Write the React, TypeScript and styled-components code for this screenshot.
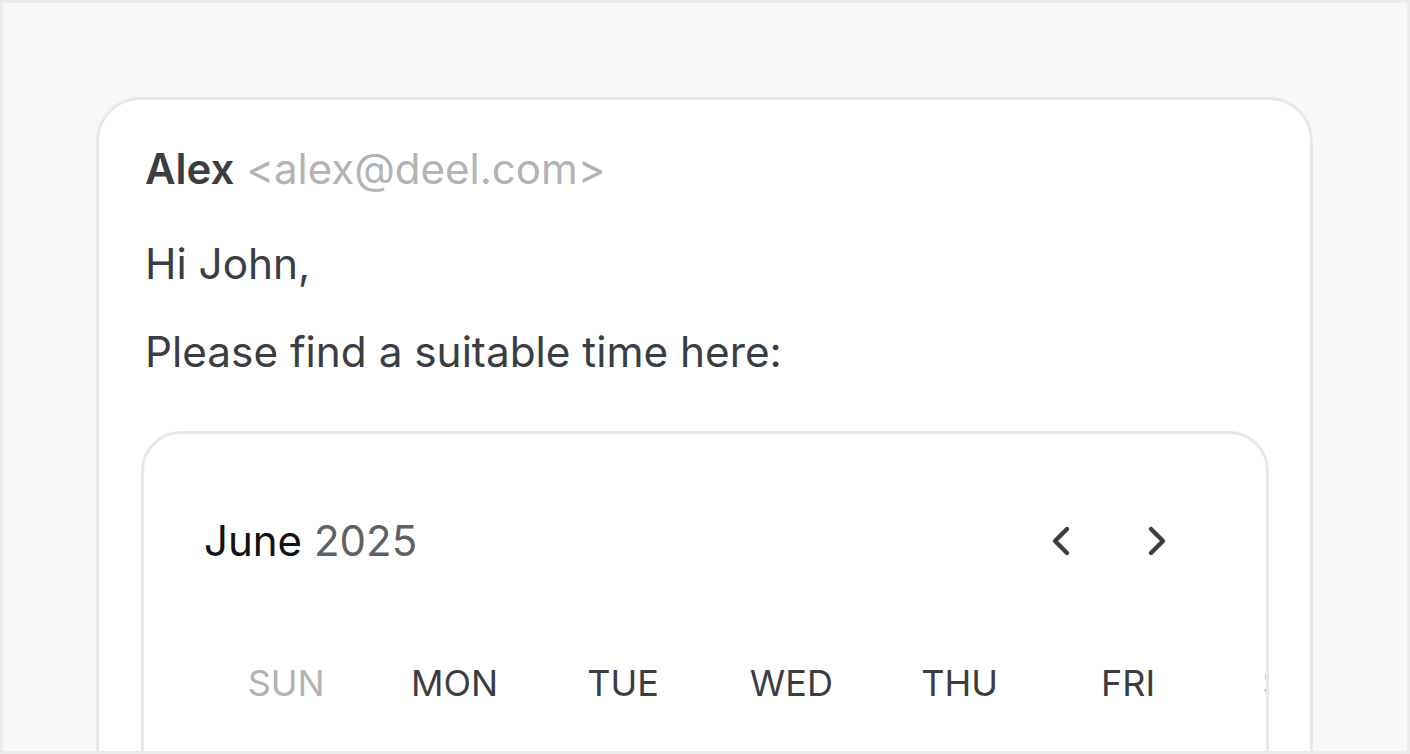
import React from "react";
import styled, { createGlobalStyle } from "styled-components";
import { ChevronLeft, ChevronRight } from "lucide-react";

const Global = createGlobalStyle`
  html, body { margin: 0; padding: 0; background: #f7f7f7; }
  * { box-sizing: border-box; }
`;

const Frame = styled.div`
  width: 1410px;
  height: 754px;
  border: 3px solid #ebebeb;
  background: #f7f7f7;
  overflow: hidden;
  padding: 94px 94px 0 93px;
  font-family: Inter, "Noto Sans", sans-serif;
`;

const Card = styled.div`
  background: #ffffff;
  border: 3px solid #e8e8e8;
  border-radius: 44px;
  padding: 44px 41px 0 42px;
  min-height: 800px;
`;

const Sender = styled.div`
  padding: 0 4px;
  font-size: 42px;
  line-height: 50px;
  color: #3a3d42;
  white-space: nowrap;
`;

const SenderName = styled.span`
  font-weight: 600;
`;

const SenderEmail = styled.span`
  color: #b3b3b3;
`;

const Paragraph = styled.p<{ $top: number }>`
  margin: ${(p) => p.$top}px 0 0;
  padding: 0 4px;
  font-size: 42.3px;
  line-height: 50px;
  color: #3a3d42;
`;

const Calendar = styled.div`
  margin-top: 54px;
  border: 3px solid #e8e8e8;
  border-radius: 40px;
  background: #ffffff;
  overflow: hidden;
  padding: 82px 0 0 60px;
  min-height: 600px;
`;

const Header = styled.div`
  display: flex;
  align-items: center;
  justify-content: space-between;
  padding-right: 85px;
`;

const MonthTitle = styled.div`
  font-size: 42px;
  line-height: 50px;
  color: #111111;
`;

const Year = styled.span`
  color: #5f6166;
`;

const NavGroup = styled.div`
  display: flex;
  gap: 48px;
`;

const NavButton = styled.button`
  width: 48px;
  height: 48px;
  padding: 0;
  border: none;
  background: transparent;
  color: #3a3d42;
  display: flex;
  align-items: center;
  justify-content: center;
  cursor: pointer;
`;

const DayGrid = styled.div`
  margin-top: 96px;
  margin-left: -2px;
  display: grid;
  grid-template-columns: repeat(7, 168.4px);
  width: 1179px;
`;

const DayLabel = styled.div<{ $muted?: boolean }>`
  text-align: center;
  font-size: 36px;
  line-height: 42px;
  color: ${(p) => (p.$muted ? "#b3b3b3" : "#3a3d42")};
`;

const days = ["SUN", "MON", "TUE", "WED", "THU", "FRI", "SAT"];

export default function App() {
  return (
    <>
      <Global />
      <Frame>
        <Card>
          <Sender>
            <SenderName>Alex</SenderName> <SenderEmail>&lt;alex@deel.com&gt;</SenderEmail>
          </Sender>
          <Paragraph $top={45}>Hi John,</Paragraph>
          <Paragraph $top={38}>Please find a suitable time here:</Paragraph>
          <Calendar>
            <Header>
              <MonthTitle>
                June <Year>2025</Year>
              </MonthTitle>
              <NavGroup>
                <NavButton aria-label="Previous month">
                  <ChevronLeft size={48} strokeWidth={2.2} />
                </NavButton>
                <NavButton aria-label="Next month">
                  <ChevronRight size={48} strokeWidth={2.2} />
                </NavButton>
              </NavGroup>
            </Header>
            <DayGrid>
              {days.map((d, i) => (
                <DayLabel key={d} $muted={i === 0 || i === 6}>
                  {d}
                </DayLabel>
              ))}
            </DayGrid>
          </Calendar>
        </Card>
      </Frame>
    </>
  );
}
